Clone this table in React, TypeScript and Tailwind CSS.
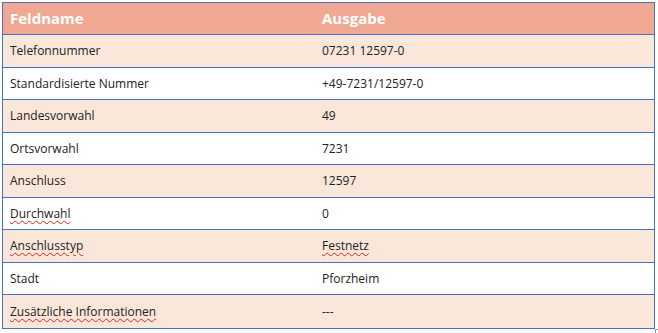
const rows: { name: string; value: string; nameErr?: boolean; valueErr?: boolean }[] = [
  { name: "Telefonnummer", value: "07231 12597-0" },
  { name: "Standardisierte Nummer", value: "+49-7231/12597-0" },
  { name: "Landesvorwahl", value: "49" },
  { name: "Ortsvorwahl", value: "7231" },
  { name: "Anschluss", value: "12597" },
  { name: "Durchwahl", value: "0", nameErr: true },
  { name: "Anschlusstyp", value: "Festnetz", nameErr: true, valueErr: true },
  { name: "Stadt", value: "Pforzheim" },
  { name: "Zusätzliche Informationen", value: "---", nameErr: true },
];

const heights = ["h-[33px]", "h-[32px]"];

function Cell({ text, err, className }: { text: string; err?: boolean; className: string }) {
  return (
    <div className={className}>
      <span
        className={
          err
            ? "underline decoration-wavy decoration-[#e02020] decoration-1 underline-offset-[2px]"
            : ""
        }
      >
        {text}
      </span>
    </div>
  );
}

export default function App() {
  return (
    <div className="w-[658px] h-[333px] bg-white relative" style={{ fontFamily: '"Open Sans", "Noto Sans", sans-serif' }}>
      <div className="ml-[2px] pt-[2px]">
        <div className="w-[653px] border border-[#4472c4]">
          <div className="flex items-center h-[32px] bg-[#f0a893] border-b border-[#4472c4] text-white font-bold text-[15px]">
            <div className="w-[310px] pl-[7px]">Feldname</div>
            <div className="pl-[9px]">Ausgabe</div>
          </div>
          {rows.map((r, i) => (
            <div
              key={r.name}
              className={`flex items-center text-[12px] text-[#222] ${heights[i % 2]} ${
                i % 2 === 0 ? "bg-[#fbe7da]" : "bg-white"
              } ${i < rows.length - 1 ? "border-b border-[#4472c4]" : ""}`}
            >
              <Cell text={r.name} err={r.nameErr} className="w-[310px] pl-[7px]" />
              <Cell text={r.value} err={r.valueErr} className="pl-[9px]" />
            </div>
          ))}
        </div>
      </div>
      <div className="absolute left-[655px] top-[329px] w-[4px] h-[4px] border-l border-t border-[#999]" />
    </div>
  );
}
